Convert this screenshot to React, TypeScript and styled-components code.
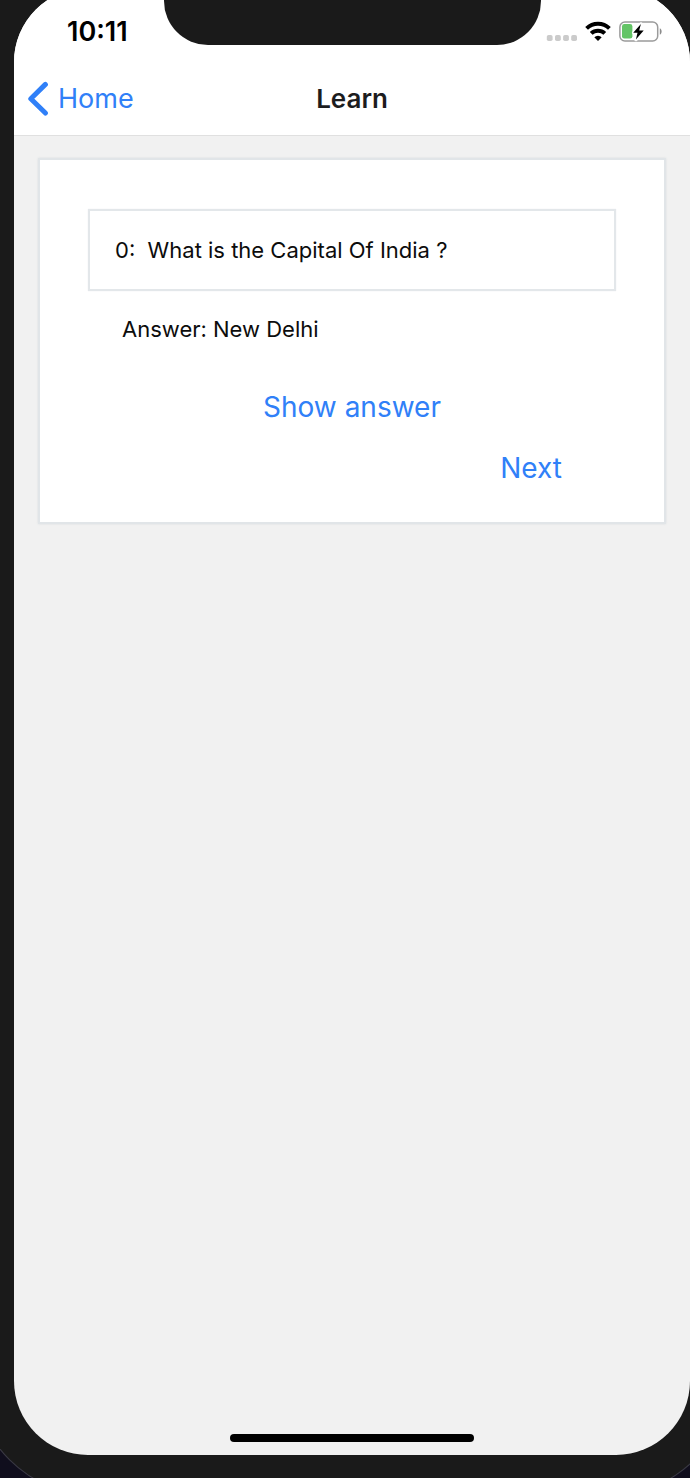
import React, { useState } from "react";
import styled, { createGlobalStyle } from "styled-components";

const GlobalStyle = createGlobalStyle`
  *, *::before, *::after { box-sizing: border-box; }
  body {
    margin: 0;
    background: #100e1d;
    font-family: Inter, "Liberation Sans", sans-serif;
    color: #0c0c0c;
  }
`;

const Viewport = styled.div`
  display: flex;
  min-height: 100vh;
  overflow: hidden;
`;

const Device = styled.div`
  flex: 1;
  display: flex;
  margin: -52px -40px -17px -26px;
  padding: 40px;
  background: #1a1a1a;
  border-radius: 122px;
  box-shadow: 0 0 0 1px #3b3a45;
`;

const Screen = styled.div`
  flex: 1;
  display: flex;
  flex-direction: column;
  overflow: hidden;
  background: #f1f1f1;
  border-radius: 74px;
`;

const StatusBar = styled.div`
  display: grid;
  grid-template-columns: 1fr 377px 1fr;
  align-items: start;
  height: 75px;
  background: #fff;
`;

const Time = styled.time`
  padding: 30px 0 0 53px;
  font-size: 27px;
  line-height: 28px;
  font-weight: 600;
  color: #000;
`;

const Notch = styled.div`
  height: 57px;
  background: #1a1a1a;
  border-radius: 0 0 44px 44px;
`;

const StatusIcons = styled.div`
  display: flex;
  justify-content: flex-end;
  gap: 8px;
  padding: 32px 28px 0 0;

  svg { flex: none; display: block; }
`;

const NavBar = styled.header`
  display: grid;
  grid-template-columns: 1fr auto 1fr;
  align-items: center;
  height: 73px;
  padding: 0 14px;
  background: #fff;
  border-bottom: 1px solid #e0e0e0;
`;

const TextButton = styled.button`
  padding: 0;
  border: 0;
  background: none;
  font: inherit;
  font-size: 28px;
  line-height: 36px;
  color: #3080f8;
  cursor: pointer;
`;

const BackButton = styled(TextButton)`
  display: flex;
  align-items: center;
  gap: 9px;
  justify-self: start;
  font-size: 27px;
`;

const Title = styled.h1`
  margin: 0;
  font-size: 26px;
  line-height: 36px;
  font-weight: 600;
  color: #1c1c1e;
`;

const Content = styled.main`
  flex: 1;
  padding: 22px 24px;
`;

const Card = styled.section`
  display: flex;
  flex-direction: column;
  padding: 49px 48px 36px;
  background: #fff;
  border: 2px solid #e1e5e8;
  box-shadow: 0 0 2px #d9dde0;
`;

const Question = styled.p`
  margin: 0;
  padding: 25px;
  border: 2px solid #e3e7ea;
  box-shadow: 0 0 1px #e3e7ea;
  font-size: 22px;
  line-height: 28px;
  white-space: pre-wrap;
`;

const Answer = styled.p`
  margin: 24px 34px 46px;
  font-size: 22px;
  line-height: 28px;
`;

const ShowButton = styled(TextButton)`
  align-self: center;
`;

const NextButton = styled(TextButton)`
  align-self: flex-end;
  margin: 25px 54px 0 0;
`;

const HomeIndicator = styled.div`
  align-self: center;
  width: 36%;
  height: 8px;
  margin-bottom: 13px;
  border-radius: 4px;
  background: #000;
`;

const SignalDots = () => (
  <svg width="31" height="22" viewBox="0 0 31 22" fill="#cbcbcb" aria-hidden="true">
    {[0.8, 9, 17.1, 25.2].map((x) => (
      <rect key={x} x={x} y="15" width="5.8" height="6" rx="1.8" />
    ))}
  </svg>
);

const Wifi = () => (
  <svg width="26" height="22" viewBox="0 0 26 22" aria-hidden="true">
    <g fill="none" stroke="#000" strokeWidth="4">
      <path d="M1.6 8.4A16.4 16.4 0 0 1 24.4 8.4" />
      <path d="M6.2 13.4A9.8 9.8 0 0 1 19.8 13.4" />
    </g>
    <path d="M9.3 17.2A5.2 5.2 0 0 1 16.7 17.2L13 21Z" />
  </svg>
);

const Battery = () => (
  <svg width="43" height="22" viewBox="0 0 43 22" aria-hidden="true">
    <rect x="0.9" y="2" width="37.8" height="19" rx="5" fill="none" stroke="#9b9b9b" strokeWidth="1.5" />
    <path d="M40.8 8.2C43.2 9.4 43.2 13.6 40.8 14.8Z" fill="#8c8c8c" />
    <rect x="3" y="4" width="10.4" height="14.6" rx="2.4" fill="#64c466" />
    <path
      d="M21.9 4L14.6 12.8H18.5L16.9 19.6L24.7 10.4H20.2Z"
      stroke="#fff"
      strokeWidth="3.4"
      strokeLinejoin="round"
      fill="#fff"
    />
    <path d="M21.9 4L14.2 12.8H18.5L16.9 19.6L24.7 10.4H20.2Z" fill="#000" />
  </svg>
);

const Chevron = () => (
  <svg width="21" height="36" viewBox="0 0 21 36" aria-hidden="true">
    <path
      d="M17.4 3.4L2.8 17.8L17.4 32"
      fill="none"
      stroke="#3080f8"
      strokeWidth="5"
      strokeLinecap="round"
      strokeLinejoin="round"
    />
  </svg>
);

export default function App() {
  const [shown, setShown] = useState(true);

  return (
    <>
      <GlobalStyle />
      <Viewport>
        <Device>
          <Screen>
            <StatusBar>
              <Time>10:11</Time>
              <Notch />
              <StatusIcons>
                <SignalDots />
                <Wifi />
                <Battery />
              </StatusIcons>
            </StatusBar>
            <NavBar>
              <BackButton type="button">
                <Chevron />
                Home
              </BackButton>
              <Title>Learn</Title>
            </NavBar>
            <Content>
              <Card>
                <Question>{"0:  What is the Capital Of India ?"}</Question>
                <Answer>Answer: {shown && "New Delhi"}</Answer>
                <ShowButton type="button" onClick={() => setShown(true)}>
                  Show answer
                </ShowButton>
                <NextButton type="button" onClick={() => setShown(false)}>
                  Next
                </NextButton>
              </Card>
            </Content>
            <HomeIndicator />
          </Screen>
        </Device>
      </Viewport>
    </>
  );
}
